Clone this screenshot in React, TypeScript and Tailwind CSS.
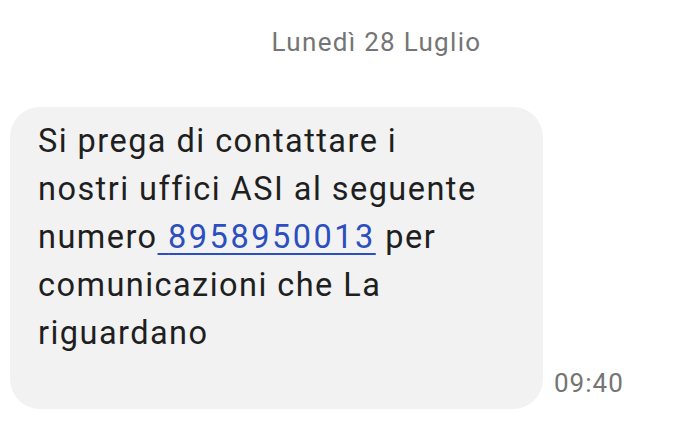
import React from "react";

const App = () => {
  return (
    <div className="w-[678px] h-[423px] bg-white overflow-hidden font-['Roboto',sans-serif]">
      <div className="flex justify-center pt-[26px] pl-[75px]">
        <span className="text-[26px] leading-[32px] tracking-[1.3px] text-[#757575]">Lunedì 28 Luglio</span>
      </div>
      <div className="flex items-end gap-[11px] mt-[49px] pl-[10px]">
        <div className="w-[533px] h-[302px] rounded-[30px] bg-[#f2f2f2] pl-[28px] pt-[10px]">
          <p className="text-[32.5px] leading-[48px] tracking-[1.45px] text-[#1f1f1f] whitespace-nowrap">
            Si prega di contattare i
            <br />
            nostri uffici ASI al seguente
            <br />
            numero
            <a href="#" className="text-[#2b4fbf] tracking-[2.5px] underline decoration-2 underline-offset-[5px]">
              {"\u00a0"}8958950013
            </a>{" "}
            per
            <br />
            comunicazioni che La
            <br />
            riguardano
          </p>
        </div>
        <span className="text-[26px] leading-[32px] tracking-[1px] text-[#757575] mb-[10px]">09:40</span>
      </div>
    </div>
  );
};

export default App;
